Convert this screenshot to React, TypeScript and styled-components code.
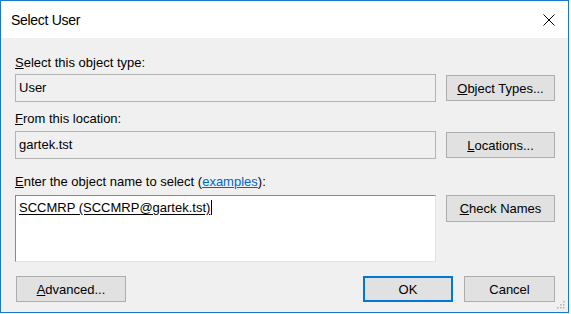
import React from "react";
import styled, { createGlobalStyle } from "styled-components";

const Global = createGlobalStyle`
  html, body { margin: 0; padding: 0; background: #ffffff; }
  body { font-family: "Liberation Sans", Arial, sans-serif; }
  * { box-sizing: border-box; }
`;

const Window = styled.div`
  position: relative;
  width: 569px;
  height: 313px;
  border: 1px solid #1979ca;
  display: flex;
  flex-direction: column;
  background: #f0f0f0;
`;

const TitleBar = styled.div`
  height: 37px;
  background: #ffffff;
  display: flex;
  align-items: center;
  padding-left: 10px;
`;

const Title = styled.div`
  flex: 1;
  font-size: 14px;
  letter-spacing: -0.3px;
  color: #000;
`;

const CloseButton = styled.div`
  width: 38px;
  height: 37px;
  display: flex;
  align-items: center;
  justify-content: center;
`;

const Body = styled.div`
  flex: 1;
  display: flex;
  flex-direction: column;
  padding: 17px 13px 0 14px;
  font-size: 13px;
  color: #000;
`;

const Label = styled.div<{ $top: number }>`
  height: 16px;
  line-height: 16px;
  margin-top: ${(p) => p.$top}px;
  white-space: nowrap;
`;

const Row = styled.div<{ $top: number; $align?: string }>`
  display: flex;
  gap: 10px;
  align-items: ${(p) => p.$align || "center"};
  margin-top: ${(p) => p.$top}px;
`;

const ReadOnlyField = styled.div`
  width: 421px;
  height: 28px;
  border: 1px solid #b4b4b4;
  background: #f0f0f0;
  padding: 5px 3px 0;
  line-height: 16px;
  white-space: nowrap;
`;

const NamesBox = styled.div`
  width: 421px;
  height: 67px;
  background: #ffffff;
  border-top: 1px solid #8a8a8a;
  border-left: 1px solid #8a8a8a;
  border-right: 1px solid #e3e3e3;
  border-bottom: 1px solid #e3e3e3;
  padding: 4px 3px 0;
  line-height: 16px;
  white-space: nowrap;
`;

const ResolvedName = styled.span`
  text-decoration: underline;
  text-underline-offset: 2px;
  border-right: 1px solid #000;
  padding-right: 1px;
`;

const Button = styled.button<{ $width: number; $default?: boolean; $height?: number }>`
  width: ${(p) => p.$width}px;
  height: ${(p) => p.$height || 26}px;
  flex: none;
  background: #e1e1e1;
  border: ${(p) => (p.$default ? "2px solid #0078d7" : "1px solid #adadad")};
  font-family: "Liberation Sans", Arial, sans-serif;
  font-size: 13px;
  color: #000;
  padding: 0;
  margin: 0;
  display: flex;
  align-items: center;
  justify-content: center;
`;

const Link = styled.span`
  color: #0066cc;
  text-decoration: underline;
`;

const Footer = styled.div`
  display: flex;
  align-items: center;
  margin-top: 14px;
  padding-left: 1px;
`;

const Spacer = styled.div`
  flex: 1;
`;

const FooterButtons = styled.div`
  display: flex;
  gap: 11px;
`;

const Grip = styled.svg`
  position: absolute;
  right: 3px;
  bottom: 3px;
`;

export default function App() {
  return (
    <>
      <Global />
      <Window>
        <TitleBar>
          <Title>Select User</Title>
          <CloseButton>
            <svg width="12" height="12" viewBox="0 0 12 12">
              <path d="M0.5 0.5 L11.5 11.5 M11.5 0.5 L0.5 11.5" stroke="#000" strokeWidth="1" fill="none" />
            </svg>
          </CloseButton>
        </TitleBar>
        <Body>
          <Label $top={0}>
            <u>S</u>elect this object type:
          </Label>
          <Row $top={3}>
            <ReadOnlyField>User</ReadOnlyField>
            <Button $width={109}>
              <span>
                <u>O</u>bject Types...
              </span>
            </Button>
          </Row>
          <Label $top={9}>
            <u>F</u>rom this location:
          </Label>
          <Row $top={4}>
            <ReadOnlyField>gartek.tst</ReadOnlyField>
            <Button $width={109}>
              <span>
                <u>L</u>ocations...
              </span>
            </Button>
          </Row>
          <Label $top={15}>
            <u>E</u>nter the object name to select (<Link>examples</Link>):
          </Label>
          <Row $top={5} $align="flex-start">
            <NamesBox>
              <ResolvedName>SCCMRP (SCCMRP@gartek.tst)</ResolvedName>
            </NamesBox>
            <Button $width={109} $height={27}>
              <span>
                <u>C</u>heck Names
              </span>
            </Button>
          </Row>
          <Footer>
            <Button $width={110}>
              <span>
                <u>A</u>dvanced...
              </span>
            </Button>
            <Spacer />
            <FooterButtons>
              <Button $width={90} $default>
                OK
              </Button>
              <Button $width={91}>Cancel</Button>
            </FooterButtons>
          </Footer>
        </Body>
        <Grip width="8" height="8" viewBox="0 0 8 8">
          <rect x="6" y="0" width="1.5" height="1.5" fill="#b0b0b0" />
          <rect x="3" y="3" width="1.5" height="1.5" fill="#b0b0b0" />
          <rect x="6" y="3" width="1.5" height="1.5" fill="#b0b0b0" />
          <rect x="0" y="6" width="1.5" height="1.5" fill="#b0b0b0" />
          <rect x="3" y="6" width="1.5" height="1.5" fill="#b0b0b0" />
          <rect x="6" y="6" width="1.5" height="1.5" fill="#b0b0b0" />
        </Grip>
      </Window>
    </>
  );
}
